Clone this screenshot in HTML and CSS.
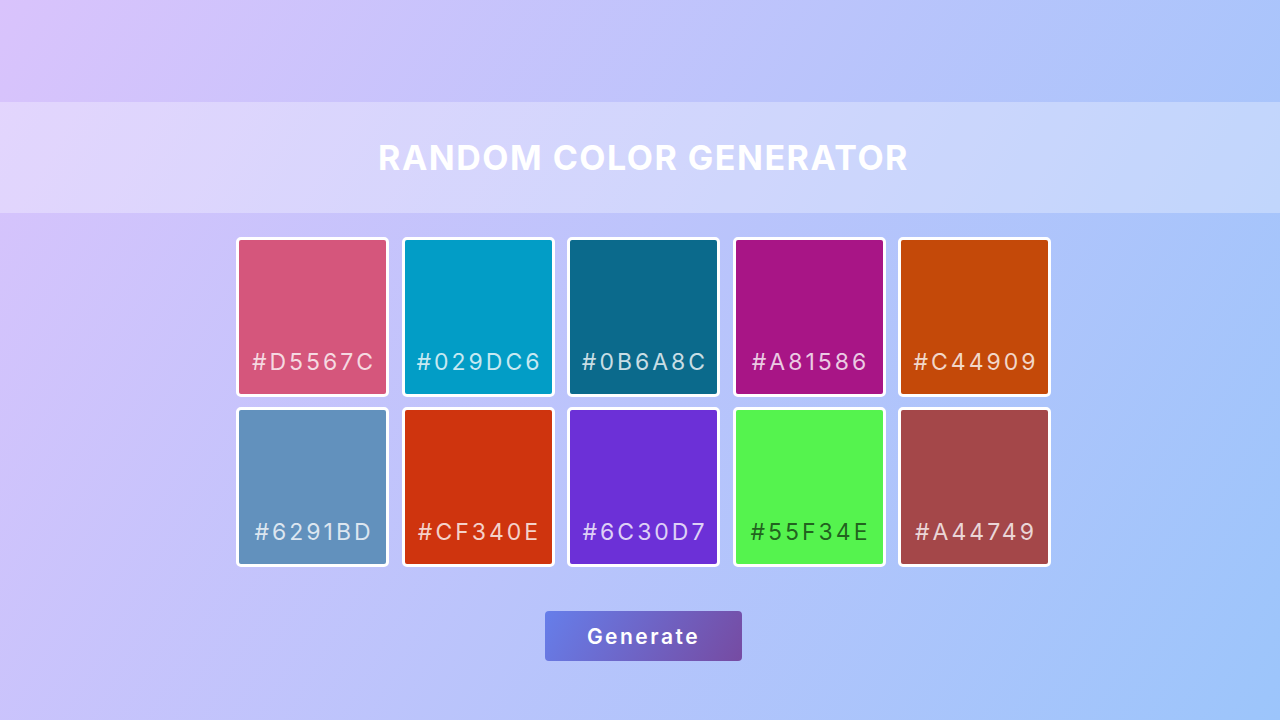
FILE: index.html
```html
<!DOCTYPE html>
<html lang="en">
<head>
<meta charset="utf-8">
<title>Random Color Generator</title>
<link rel="stylesheet" href="styles.css">
</head>
<body>
  <header class="banner">
    <h1 class="title">RANDOM COLOR GENERATOR</h1>
  </header>
  <main class="palette">
    <div class="swatch" style="background:#D5567C"><span class="hex">#D5567C</span></div>
    <div class="swatch" style="background:#029DC6"><span class="hex">#029DC6</span></div>
    <div class="swatch" style="background:#0B6A8C"><span class="hex">#0B6A8C</span></div>
    <div class="swatch" style="background:#A81586"><span class="hex">#A81586</span></div>
    <div class="swatch" style="background:#C44909"><span class="hex">#C44909</span></div>
    <div class="swatch" style="background:#6291BD"><span class="hex">#6291BD</span></div>
    <div class="swatch" style="background:#CF340E"><span class="hex">#CF340E</span></div>
    <div class="swatch" style="background:#6C30D7"><span class="hex">#6C30D7</span></div>
    <div class="swatch light" style="background:#55F34E"><span class="hex">#55F34E</span></div>
    <div class="swatch" style="background:#A44749"><span class="hex">#A44749</span></div>
  </main>
  <div class="actions">
    <button class="generate">Generate</button>
  </div>
</body>
</html>
```
FILE: styles.css
```css
* { box-sizing: border-box; }
html, body { margin: 0; padding: 0; }
body {
  width: 1280px;
  height: 720px;
  overflow: hidden;
  font-family: Inter, "Noto Sans", sans-serif;
  background: linear-gradient(120deg, #d9c3fc 0%, #9cc5fb 100%);
  display: flex;
  flex-direction: column;
  align-items: center;
  padding-top: 102px;
  padding-left: 7px;
}
.banner {
  width: calc(100% + 7px);
  margin-left: -7px;
  height: 111px;
  background: rgba(255, 255, 255, 0.3);
  display: flex;
  align-items: center;
  justify-content: center;
  padding-left: 7px;
}
.title {
  margin: 0;
  color: #fff;
  font-size: 34px;
  font-weight: 700;
  letter-spacing: 1.5px;
}
.palette {
  margin-top: 24px;
  display: grid;
  grid-template-columns: repeat(5, 153px);
  grid-auto-rows: 160px;
  column-gap: 12.5px;
  row-gap: 10px;
}
.swatch {
  border: 3px solid #fff;
  border-radius: 5px;
  display: flex;
  align-items: flex-end;
  justify-content: center;
  padding-bottom: 18px;
}
.hex {
  color: rgba(255, 255, 255, 0.78);
  font-size: 23px;
  font-weight: 400;
  letter-spacing: 3px;
  margin-right: -3px;
}
.light .hex { color: rgba(0, 0, 0, 0.62); }
.actions {
  margin-top: 44px;
}
.generate {
  width: 197px;
  height: 50px;
  border: none;
  border-radius: 4px;
  background: linear-gradient(120deg, #667eea 0%, #764ba2 100%);
  color: #fff;
  font-family: Inter, "Noto Sans", sans-serif;
  font-size: 21px;
  font-weight: 600;
  letter-spacing: 2.5px;
  cursor: pointer;
}
```
